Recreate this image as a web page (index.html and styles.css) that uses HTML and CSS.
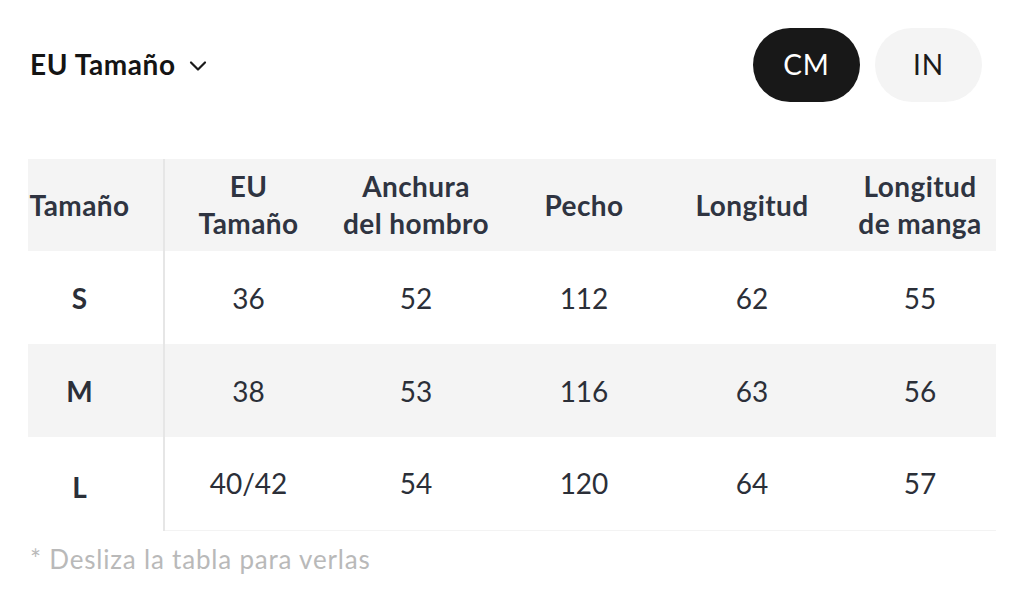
FILE: index.html
```html
<!DOCTYPE html>
<html lang="es">
<head>
<meta charset="utf-8">
<link rel="stylesheet" href="styles.css">
</head>
<body>
<div class="page">
  <div class="topbar">
    <div class="size-select">
      <span>EU Tamaño</span>
      <svg class="chev" width="18" height="12" viewBox="0 0 18 12"><path d="M2 2.5 L9 9.5 L16 2.5" fill="none" stroke="#1a1a1a" stroke-width="2.2" stroke-linecap="round" stroke-linejoin="round"/></svg>
    </div>
    <div class="units">
      <button class="unit active">CM</button>
      <button class="unit">IN</button>
    </div>
  </div>
  <div class="table-wrap">
    <table class="sizes">
      <thead>
        <tr>
          <th class="first">Tamaño</th>
          <th>EU<br>Tamaño</th>
          <th>Anchura<br>del hombro</th>
          <th>Pecho</th>
          <th>Longitud</th>
          <th>Longitud<br>de manga</th>
        </tr>
      </thead>
      <tbody>
        <tr><td class="first">S</td><td>36</td><td>52</td><td>112</td><td>62</td><td>55</td></tr>
        <tr class="alt"><td class="first">M</td><td>38</td><td>53</td><td>116</td><td>63</td><td>56</td></tr>
        <tr class="last"><td class="first">L</td><td>40/42</td><td>54</td><td>120</td><td>64</td><td>57</td></tr>
      </tbody>
    </table>
  </div>
  <p class="note">* Desliza la tabla para verlas</p>
</div>
</body>
</html>
```

FILE: styles.css
```css
* { box-sizing: border-box; }
html, body { margin: 0; padding: 0; background: #fff; }
body { font-family: Lato, "Noto Sans", sans-serif; color: #2f3441; }
.page { width: 1024px; height: 600px; padding: 28px 28px 0 28px; overflow: hidden; }
.topbar { display: flex; justify-content: space-between; align-items: center; padding-right: 14px; }
.size-select { display: flex; align-items: center; gap: 13px; font-weight: 700; font-size: 28px; letter-spacing: 0.6px; color: #141414; padding-left: 2px; margin-top: -3px; }
.chev { margin-top: 4px; }
.units { display: flex; gap: 15px; }
.unit { width: 107px; height: 74px; border-radius: 37px; border: none; font-family: Lato, sans-serif; font-size: 28px; font-weight: 400; background: #f4f4f4; color: #1a1a1a; padding: 0 0 3px 0; letter-spacing: 1px; }
.unit.active { background: #181818; color: #fff; }
.table-wrap { margin-top: 57px; width: 968px; overflow: hidden; }
.sizes { border-collapse: collapse; table-layout: fixed; width: 976px; }
.sizes th, .sizes td { text-align: center; padding: 0; }
.sizes th { height: 92px; background: #f4f4f4; font-weight: 700; font-size: 28px; line-height: 37px; letter-spacing: 0.4px; color: #2f3441; }
.sizes td { height: 93px; font-size: 28px; color: #2b2f38; }
.sizes .first { width: 136px; padding-right: 32px; border-right: 2px solid #e6e6e6; }
.sizes td.first { font-weight: 700; }
.sizes th:not(.first), .sizes td:not(.first) { width: 168px; }
.sizes tr.alt td { background: #f4f4f4; }
.sizes tr.last td { height: 80px; border-bottom: 1px solid #f3f3f3; }
.sizes tr.last td.first { height: 93px; border-bottom: none; vertical-align: top; padding-top: 33px; }
.note { margin: 12px 0 0 2px; font-size: 26px; letter-spacing: 0.8px; color: #b9b9b9; }
```
